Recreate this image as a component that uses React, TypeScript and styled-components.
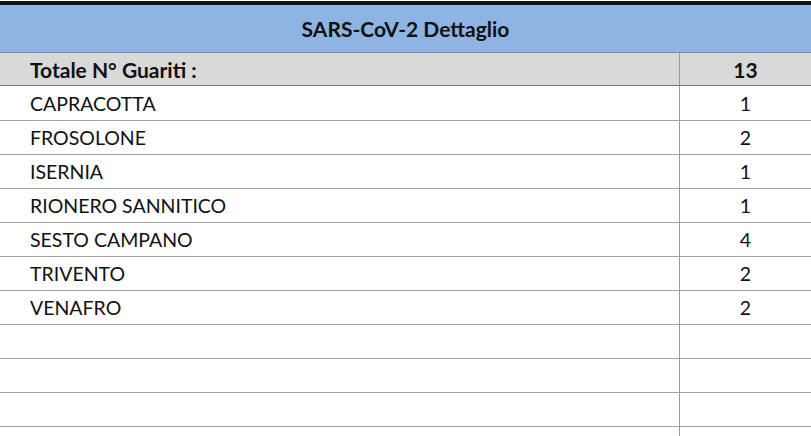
import React from "react";
import styled, { createGlobalStyle } from "styled-components";

const Global = createGlobalStyle`
  html, body { margin: 0; padding: 0; background: #ffffff; overflow: hidden; }
  body { font-family: Lato, "Open Sans", "Liberation Sans", sans-serif; }
`;

const Sheet = styled.div`
  width: 811px;
  height: 436px;
  overflow: hidden;
  padding-top: 1px;
  box-sizing: border-box;
  background: #fff;
`;

const Title = styled.div`
  height: 47px;
  border-top: 4px solid #141414;
  border-bottom: 1px solid #7a8aa3;
  background: #8db4e2;
  display: flex;
  align-items: center;
  justify-content: center;
  font-weight: 700;
  font-size: 21px;
  color: #111;
`;

const Row = styled.div<{ $total?: boolean; $h: number }>`
  display: grid;
  grid-template-columns: 680px 1fr;
  height: ${(p) => p.$h}px;
  background: ${(p) => (p.$total ? "#d9d9d9" : "#ffffff")};
  border-bottom: 1px solid ${(p) => (p.$total ? "#767676" : "#a3a3a3")};
  font-weight: ${(p) => (p.$total ? 700 : 400)};
  font-size: ${(p) => (p.$total ? "21px" : "19.5px")};
  color: #111;
`;

const NameCell = styled.div`
  display: flex;
  align-items: center;
  padding-left: 30px;
  border-right: 1px solid #9a9a9a;
  white-space: nowrap;
`;

const ValueCell = styled.div`
  display: flex;
  align-items: center;
  justify-content: center;
`;

const rows: [string, string][] = [
  ["CAPRACOTTA", "1"],
  ["FROSOLONE", "2"],
  ["ISERNIA", "1"],
  ["RIONERO SANNITICO", "1"],
  ["SESTO CAMPANO", "4"],
  ["TRIVENTO", "2"],
  ["VENAFRO", "2"],
  ["", ""],
  ["", ""],
  ["", ""],
  ["", ""],
];

export default function App() {
  return (
    <>
      <Global />
      <Sheet>
        <Title>SARS-CoV-2 Dettaglio</Title>
        <Row $total $h={32}>
          <NameCell>Totale N° Guariti :</NameCell>
          <ValueCell>13</ValueCell>
        </Row>
        {rows.map(([n, v], i) => (
          <Row key={i} $h={i === 0 ? 34 : 33}>
            <NameCell>{n}</NameCell>
            <ValueCell>{v}</ValueCell>
          </Row>
        ))}
      </Sheet>
    </>
  );
}
